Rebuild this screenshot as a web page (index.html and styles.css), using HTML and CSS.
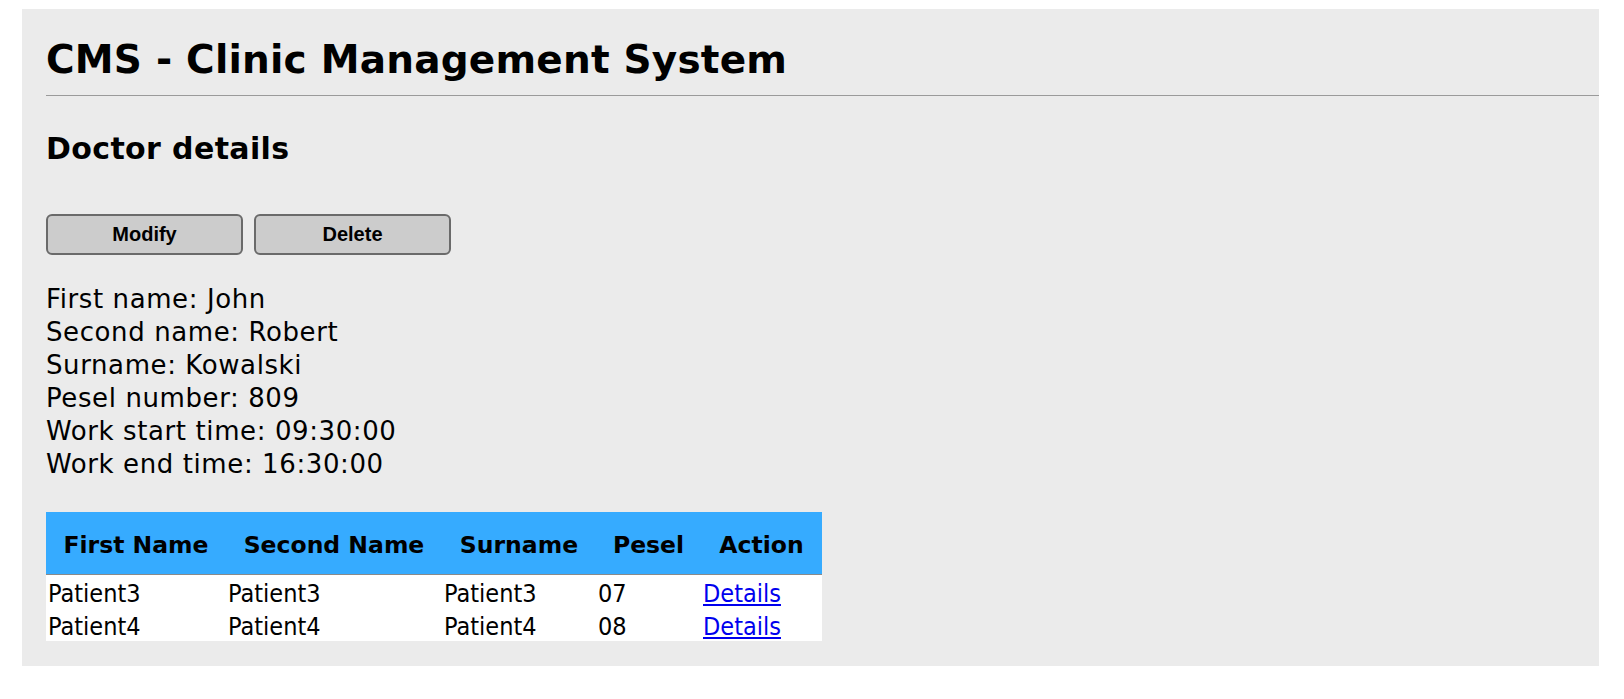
FILE: index.html
```html
<!DOCTYPE html>
<html>
<head>
<meta charset="utf-8">
<title>CMS - Clinic Management System</title>
<link rel="stylesheet" href="styles.css">
</head>
<body>
<div class="page">
  <h1 class="title">CMS - Clinic Management System</h1>
  <hr class="rule">
  <h2 class="subtitle">Doctor details</h2>
  <div class="actions">
    <button class="btn" type="button">Modify</button>
    <button class="btn" type="button">Delete</button>
  </div>
  <div class="details">
    <div>First name: John</div>
    <div>Second name: Robert</div>
    <div>Surname: Kowalski</div>
    <div>Pesel number: 809</div>
    <div>Work start time: 09:30:00</div>
    <div>Work end time: 16:30:00</div>
  </div>
  <table class="patients">
    <thead>
      <tr>
        <th class="c1">First Name</th>
        <th class="c2">Second Name</th>
        <th class="c3">Surname</th>
        <th class="c4">Pesel</th>
        <th class="c5">Action</th>
      </tr>
    </thead>
    <tbody>
      <tr>
        <td>Patient3</td>
        <td>Patient3</td>
        <td>Patient3</td>
        <td>07</td>
        <td><a href="#">Details</a></td>
      </tr>
      <tr>
        <td>Patient4</td>
        <td>Patient4</td>
        <td>Patient4</td>
        <td>08</td>
        <td><a href="#">Details</a></td>
      </tr>
    </tbody>
  </table>
</div>
</body>
</html>
```

FILE: styles.css
```css
html, body {
  margin: 0;
  padding: 0;
  background: #ffffff;
}

body {
  font-family: "DejaVu Sans", Verdana, sans-serif;
  color: #000;
}

.page {
  margin: 9px 25px 0 22px;
  padding: 27px 0 25px 24px;
  background: #ebebeb;
}

.title {
  margin: 0;
  font-size: 39px;
  line-height: 48px;
  font-weight: bold;
  letter-spacing: 0.2px;
}

.rule {
  margin: 11px 0 0 0;
  border: 0;
  height: 1px;
  background: #9a9a9a;
}

.subtitle {
  margin: 35px 0 0 0;
  font-size: 30px;
  line-height: 36px;
  font-weight: bold;
  letter-spacing: 0.37px;
}

.actions {
  display: flex;
  gap: 11px;
  margin-top: 47px;
}

.btn {
  width: 197px;
  height: 41px;
  margin: 0;
  padding: 0;
  background: #cccccc;
  border: 2px solid #6a6a6a;
  border-radius: 6px;
  font-family: "Liberation Sans", Arial, sans-serif;
  font-size: 20px;
  font-weight: bold;
  color: #000;
}

.details {
  margin-top: 28px;
  font-size: 26px;
  line-height: 33px;
  letter-spacing: 0.6px;
}

.patients {
  margin-top: 31px;
  border-collapse: collapse;
  border-spacing: 0;
  table-layout: fixed;
  width: 776px;
  background: #ffffff;
}

.patients th {
  background: #36abff;
  font-family: "DejaVu Sans", Verdana, sans-serif;
  font-size: 23.5px;
  font-weight: bold;
  line-height: 28px;
  padding: 19px 0 15px 0;
  text-align: center;
  border-bottom: 1px solid #8a8a8a;
  white-space: nowrap;
}

.c1 { width: 180px; }
.c2 { width: 216px; }
.c3 { width: 154px; }
.c4 { width: 105px; }
.c5 { width: 121px; }

.patients td {
  font-family: "DejaVu Sans Condensed", "DejaVu Sans", sans-serif;
  font-stretch: condensed;
  font-size: 25px;
  line-height: 29px;
  padding: 4px 0 0 2px;
  text-align: left;
  white-space: nowrap;
}

.patients a {
  color: #0000ee;
  text-decoration: underline;
}
```
